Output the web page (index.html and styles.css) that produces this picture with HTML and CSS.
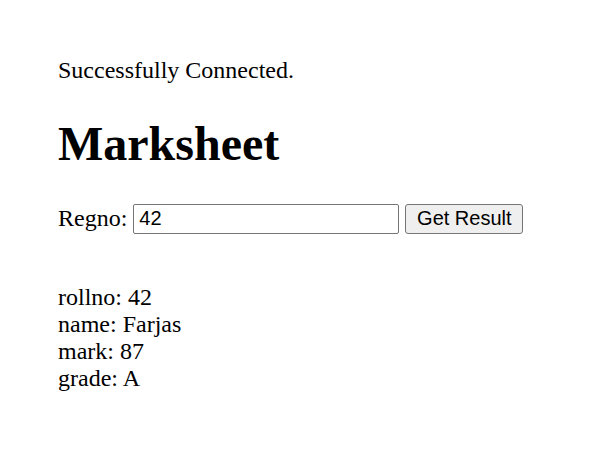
FILE: index.html
```html
<!DOCTYPE html>
<html>
<head>
<meta charset="utf-8">
<link rel="stylesheet" href="styles.css">
</head>
<body>
<div class="page">
<p class="status">Successfully Connected.</p>
<h1 class="title">Marksheet</h1>
<form class="form">
<label class="label">Regno: <input class="field" type="text" value="42"></label>
<button class="btn" type="button">Get Result</button>
</form>
<div class="result">
<div>rollno: 42</div>
<div>name: Farjas</div>
<div>mark: 87</div>
<div>grade: A</div>
</div>
</div>
</body>
</html>
```
FILE: styles.css
```css
html, body { margin: 0; padding: 0; background: #fff; }
.page { padding: 57px 0 0 58px; font-family: "Liberation Serif", serif; font-size: 24px; color: #000; }
.status { margin: 0; }
.title { margin: 32px 0 0; font-size: 48px; font-weight: bold; }
.form { margin-top: 32px; display: flex; align-items: center; gap: 6px; height: 31px; }
.label { display: flex; align-items: center; gap: 6px; }
.field { width: 266px; height: 30px; box-sizing: border-box; font-family: "Liberation Sans", sans-serif; font-size: 20px; color: #000; border: 1px solid #767676; border-radius: 2px; padding: 0 5px; margin: 0; }
.btn { height: 30px; width: 118px; box-sizing: border-box; font-family: "Liberation Sans", sans-serif; font-size: 20px; color: #000; background: #efefef; border: 1px solid #767676; border-radius: 3px; padding: 0; margin: 0; }
.result { margin-top: 50px; }
```
